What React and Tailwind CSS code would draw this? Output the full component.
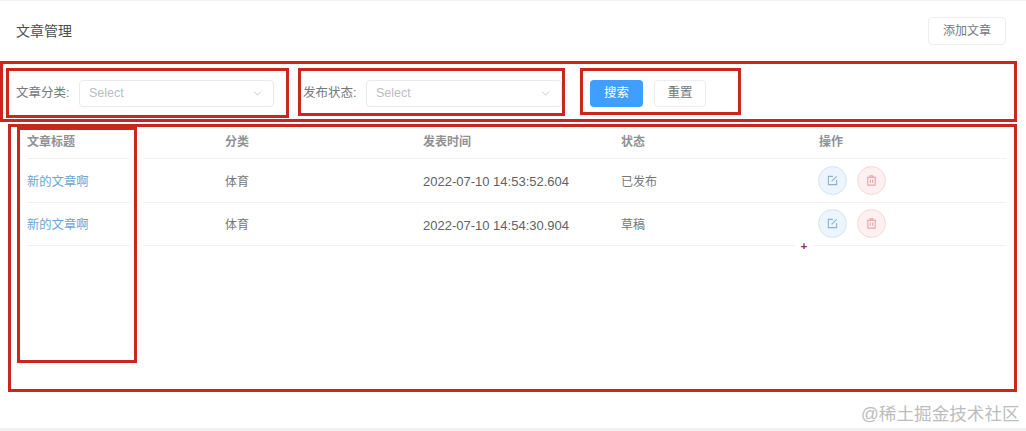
import React from 'react';
import { ChevronDown } from 'lucide-react';

const rows = [
    { title: '新的文章啊', category: '体育', time: '2022-07-10 14:53:52.604', status: '已发布' },
    { title: '新的文章啊', category: '体育', time: '2022-07-10 14:54:30.904', status: '草稿' },
];

const FONT = "font-['Liberation_Sans','Noto_Sans_CJK_SC',sans-serif]";

const FilterSelect = ({ label, width }) => (
    <div className="flex items-center">
        <span className="w-[63px] text-[12.5px] text-[#75777b]">{label}</span>
        <div className={`${width} h-[27px] flex items-center justify-between pl-[9px] pr-[9px] rounded-[4px] border border-[#e8eaee]`}>
            <span className="text-[12.5px] text-[#babdc2]">Select</span>
            <ChevronDown size={13} strokeWidth={1.5} className="text-[#b9bcc2]" />
        </div>
    </div>
);

const EditIcon = () => (
    <svg width="11" height="11" viewBox="0 0 12 12" fill="none" stroke="#8ab2cd" strokeWidth="1.2">
        <path d="M6.5 1.5H1.5V10.5H10.5V5.5" />
        <path d="M5 7L10.5 1.5" />
    </svg>
);

const TrashIcon = () => (
    <svg width="11" height="11" viewBox="0 0 12 12" fill="none" stroke="#e0a5ab" strokeWidth="1.2">
        <path d="M1 2.5H11" />
        <path d="M4.5 2.5V1H7.5V2.5" />
        <path d="M2 2.5V11H10V2.5" />
        <path d="M4.75 5V8.5M7.25 5V8.5" />
    </svg>
);

const Annotation = ({ className }) => (
    <div className={`absolute border-[3px] border-[#c9261d] pointer-events-none ${className}`}></div>
);

const App = () => {
    return (
        <div className={`relative w-[1026px] h-[431px] overflow-hidden bg-white border-t border-b-[3px] border-[#f0f0f1] ${FONT}`}>
            <div className="flex items-center justify-between h-[60px] pl-4 pr-5">
                <h1 className="text-[14px] text-[#4b4d52]">文章管理</h1>
                <button className="w-[78px] h-[28px] rounded-[4px] border border-[#ebedf0] text-[12px] text-[#75777b]">添加文章</button>
            </div>

            <div className="flex items-center h-[65px] pl-4">
                <FilterSelect label="文章分类:" width="w-[195px]" />
                <div className="ml-[29px]">
                    <FilterSelect label="发布状态:" width="w-[196px]" />
                </div>
                <button className="ml-[28px] w-[53px] h-[27px] rounded-[4px] bg-[#409eff] text-[12.5px] text-white">搜索</button>
                <button className="ml-[11px] w-[52px] h-[27px] rounded-[4px] border border-[#ebedf0] text-[12.5px] text-[#75777b]">重置</button>
            </div>

            <div className="ml-[27px] mr-5">
                <div className="grid grid-cols-[198px_198px_198px_198px_1fr] items-center h-[33px] border-b border-[#f0f1f3] text-[12px] font-bold text-[#8f9195]">
                    <span>文章标题</span>
                    <span>分类</span>
                    <span>发表时间</span>
                    <span>状态</span>
                    <span>操作</span>
                </div>
                {rows.map((row, index) => (
                    <div key={index} className="grid grid-cols-[198px_198px_198px_198px_1fr] items-center h-[43.5px] pt-[3px] border-b border-[#eff0f2] text-[12px] text-[#75777b]">
                        <span className="text-[12.3px] text-[#6aa5d6]">{row.title}</span>
                        <span>{row.category}</span>
                        <span className="text-[13px] text-[#606266]">{row.time}</span>
                        <span>{row.status}</span>
                        <div className="flex gap-[10px] ml-[-1px] mt-[-3px]">
                            <button className="w-[29px] h-[29px] flex items-center justify-center rounded-full bg-[#ecf5ff] border border-[#d5e4f0]">
                                <EditIcon />
                            </button>
                            <button className="w-[29px] h-[29px] flex items-center justify-center rounded-full bg-[#fef0f0] border border-[#f5d9d9]">
                                <TrashIcon />
                            </button>
                        </div>
                    </div>
                ))}
            </div>

            {/* gap in the row lines next to the title box */}
            <div className="absolute left-[130px] top-[150px] w-[13px] h-[100px] bg-white"></div>

            <Annotation className="left-0 top-[60px] w-[1017px] h-[61px]" />
            <Annotation className="left-[6px] top-[67px] w-[283px] h-[50px]" />
            <Annotation className="left-[298px] top-[67px] w-[267px] h-[48px]" />
            <Annotation className="left-[580px] top-[67px] w-[161px] h-[47px]" />
            <Annotation className="left-[8px] top-[123px] w-[1009px] h-[268px]" />
            <Annotation className="left-[17px] top-[126px] w-[120px] h-[236px]" />

            <div className="absolute left-[795px] top-[241px] w-[18px] h-[8px] flex items-center justify-center bg-white text-[11px] font-bold text-[#8a2a3c]">+</div>
            <span className="absolute left-[861px] top-[403px] text-[17.6px] leading-[20px] text-[#bdbdbd]">@稀土掘金技术社区</span>
        </div>
    );
};

export default App;
